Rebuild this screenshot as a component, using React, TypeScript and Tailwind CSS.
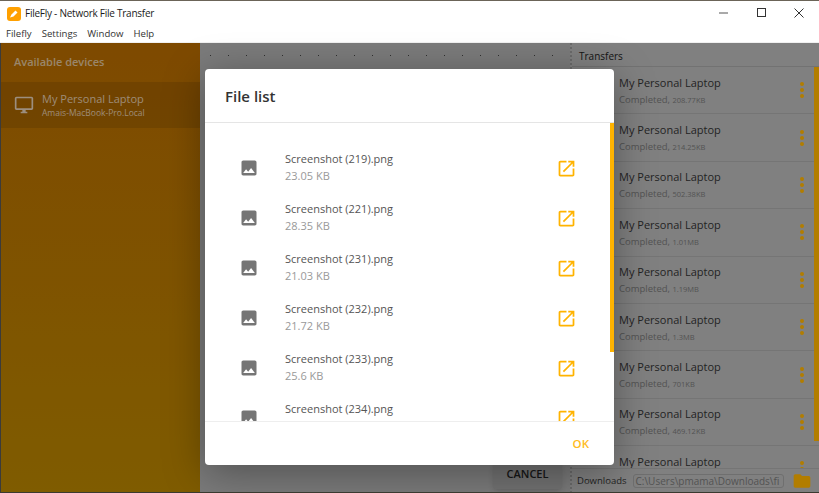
const files = [
  { name: "Screenshot (219).png", size: "23.05 KB" },
  { name: "Screenshot (221).png", size: "28.35 KB" },
  { name: "Screenshot (231).png", size: "21.03 KB" },
  { name: "Screenshot (232).png", size: "21.72 KB" },
  { name: "Screenshot (233).png", size: "25.6 KB" },
  { name: "Screenshot (234).png", size: "23.4 KB" },
];

const transfers = ["208.77KB", "214.25KB", "502.38KB", "1.01MB", "1.19MB", "1.3MB", "701KB", "469.12KB", "1.02MB"];

function ImageIcon() {
  return (
    <svg width="20" height="20" viewBox="0 0 24 24" className="fill-[#757575] shrink-0">
      <path d="M21 19V5c0-1.100-.9-2-2-2H5c-1.100 0-2 .9-2 2v14c0 1.100.9 2 2 2h14c1.100 0 2-.9 2-2zM8.500 13.500l2.500 3.010L14.500 12l4.500 6H5l3.500-4.500z" />
    </svg>
  );
}

function OpenIcon() {
  return (
    <svg width="21" height="21" viewBox="0 0 24 24" className="fill-[#ffb300] shrink-0">
      <path d="M19 19H5V5h7V3H5c-1.110 0-2 .9-2 2v14c0 1.100.89 2 2 2h14c1.100 0 2-.9 2-2v-7h-2v7zM14 3v2h3.590l-9.830 9.830 1.410 1.410L19 6.410V10h2V3h-7z" />
    </svg>
  );
}

function Dots() {
  return (
    <div className="flex flex-col gap-[2px] shrink-0">
      <span className="w-1 h-1 rounded-full bg-[#ffb300]" />
      <span className="w-1 h-1 rounded-full bg-[#ffb300]" />
      <span className="w-1 h-1 rounded-full bg-[#ffb300]" />
    </div>
  );
}

export default function App() {
  return (
    <div className="relative w-[819px] h-[493px] overflow-hidden bg-white text-[#222] font-['Open_Sans','Noto_Sans',sans-serif] border-t border-b border-t-[#6b6458] border-b-[#3a3a30]">
      {/* title bar */}
      <div className="h-[25px] flex items-center pl-[7px]">
        <div className="w-[14px] h-[14px] rounded-[3px] bg-[#ffa000] flex items-center justify-center">
          <svg width="10" height="10" viewBox="0 0 10 10">
            <path d="M1 8.500 L2.500 5.500 L6.500 1.500 L8.500 3.500 L4.500 7.500 Z" fill="#fff" />
          </svg>
        </div>
        <span className="ml-[4px] text-[10px] tracking-[-0.25px] text-[#1a1a1a]">FileFly - Network File Transfer</span>
        <div className="ml-auto flex items-center">
          <svg width="46" height="25" viewBox="0 0 46 25">
            <path d="M18 12h9" stroke="#555" strokeWidth="1" />
          </svg>
          <svg width="30" height="25" viewBox="0 0 30 25">
            <rect x="10.500" y="7.500" width="8" height="8" fill="none" stroke="#333" />
          </svg>
          <svg width="42" height="25" viewBox="0 0 42 25">
            <path d="M17.500 7.500l9 9M26.500 7.500l-9 9" stroke="#333" />
          </svg>
        </div>
      </div>
      {/* menu */}
      <div className="h-[16px] flex items-center gap-[10px] pl-[6px] text-[9.600px] text-[#333]">
        <span>Filefly</span>
        <span>Settings</span>
        <span>Window</span>
        <span>Help</span>
      </div>

      <div className="flex h-[451px] border-t border-[#f0f0f0]">
        {/* devices */}
        <aside className="w-[200px] bg-gradient-to-b from-[#b56a00] to-[#b68400] shrink-0 border-l border-[#555]">
          <div className="h-[39px] flex items-center pl-[13px] text-[11px] font-semibold text-[#dcc09a]">Available devices</div>
          <div className="h-[46px] flex items-center pl-[13px] gap-[8px] bg-black/10">
            <svg width="20" height="20" viewBox="0 0 24 24" className="fill-[#e0ccb6]">
              <path d="M21 2H3c-1.100 0-2 .9-2 2v12c0 1.100.9 2 2 2h7v2H8v2h8v-2h-2v-2h7c1.100 0 2-.9 2-2V4c0-1.100-.9-2-2-2zm0 14H3V4h18v12z" />
            </svg>
            <div>
              <div className="text-[11px] leading-[16px] text-[#e0c8ac]">My Personal Laptop</div>
              <div className="text-[8.500px] leading-[12px] text-[#e0c8ac]">Amais-MacBook-Pro.Local</div>
            </div>
          </div>
        </aside>

        {/* main */}
        <main className="flex-1 bg-[#b0b0b0] flex flex-col justify-between pb-[4px]">
          <div className="flex gap-[17px] pl-[10px] pt-[12px]">
            {Array.from({ length: 20 }).map((_, i) => (
              <span key={i} className="w-px h-px bg-[#444]" />
            ))}
          </div>
          <div className="flex justify-end pr-[8px]">
            <button className="w-[69px] h-[30px] bg-[#a4a4a4] rounded-[3px] shadow-md text-[11px] font-semibold text-[#222]">CANCEL</button>
          </div>
        </main>

        {/* transfers */}
        <section className="w-[249px] shrink-0 flex flex-col bg-[#b8b8b8] border-l-2 border-dotted border-[#999]">
          <div className="h-[24px] flex items-center pl-[7px] pt-[3px] text-[10px] border-b border-[#a4a4a4]">Transfers</div>
          <div className="relative flex-1 overflow-hidden">
            {transfers.map((size, i) => (
              <div key={i} className="h-[47.400px] flex items-center pl-[47px] pr-[15px] border-b border-[#a8a8a8]">
                <div className="flex-1 pt-[1px]">
                  <div className="text-[11px] leading-[16px] text-[#333]">My Personal Laptop</div>
                  <div className="text-[9.500px] leading-[14px] mt-[2px] text-[#777]">
                    Completed, <span className="text-[7.500px]">{size}</span>
                  </div>
                </div>
                <Dots />
              </div>
            ))}
            <div className="absolute right-0 top-0 bottom-[27px] w-[5px] bg-[#ffb300]" />
          </div>
          <div className="h-[25px] flex items-center pl-[5px] pr-[7px] gap-[6px] bg-[#b8b8b8] border-t border-[#a8a8a8]">
            <span className="text-[9.500px] text-[#333]">Downloads</span>
            <div className="flex-1 min-w-0 h-[14px] border border-[#a0a0a0] rounded-[3px] px-[2px] text-[10px] leading-[12px] text-[#777] overflow-hidden whitespace-nowrap">
              C:\Users\pmama\Downloads\fi
            </div>
            <svg width="20" height="20" viewBox="0 0 24 24" className="fill-[#ffb300] shrink-0 ml-[2px]">
              <path d="M10 4H4c-1.100 0-2 .9-2 2v12c0 1.100.9 2 2 2h16c1.100 0 2-.9 2-2V8c0-1.100-.9-2-2-2h-8l-2-2z" />
            </svg>
          </div>
        </section>
      </div>

      {/* backdrop */}
      <div className="absolute left-0 right-0 top-[42px] bottom-0 bg-black/30" />

      {/* modal */}
      <div className="absolute left-[205px] top-[68px] w-[409px] h-[396px] bg-white rounded-[4px] shadow-[0_8px_40px_rgba(0,0,0,0.35)] flex flex-col">
        <div className="h-[54px] flex items-center pl-[20px] pt-[2px] text-[15px] font-semibold text-[#333] border-b border-[#e5e5e5] shrink-0">File list</div>
        <div className="relative flex-1 overflow-hidden">
          <div className="flex flex-col pt-[20px]">
            {files.map((f) => (
              <div key={f.name} className="h-[50px] shrink-0 flex items-center pl-[34px] pr-[37px]">
                <ImageIcon />
                <div className="ml-[26px] mb-[2px] flex-1">
                  <div className="text-[11px] text-[#555] leading-[17px]">{f.name}</div>
                  <div className="text-[11px] text-[#999] leading-[17px]">{f.size}</div>
                </div>
                <OpenIcon />
              </div>
            ))}
          </div>
          <div className="absolute right-0 top-0 w-[4px] h-[229px] bg-[#ffb300]" />
        </div>
        <div className="h-[44px] flex items-center justify-end pr-[25px] border-t border-[#eee] shrink-0">
          <span className="text-[11.500px] font-semibold text-[#ffbb22]">OK</span>
        </div>
      </div>
    </div>
  );
}
